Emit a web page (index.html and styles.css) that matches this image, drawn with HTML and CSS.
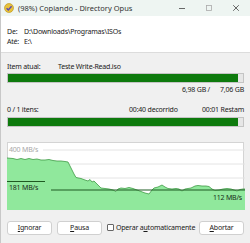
FILE: index.html
```html
<!DOCTYPE html>
<html lang="pt">
<head>
    <meta charset="UTF-8">
    <title>(98%) Copiando - Directory Opus</title>
    <link rel="stylesheet" href="styles.css">
</head>
<body>
    <div class="window">
        <div class="titlebar">
            <svg class="app-icon" width="10" height="10" viewBox="0 0 10 10">
                <circle cx="5" cy="5" r="4.5" fill="#e8c23a" stroke="#b8901a" stroke-width="0.6"/>
                <path d="M2.6 5.2 L4.3 7 L7.6 3.2" fill="none" stroke="#5a4ab0" stroke-width="1.4"/>
            </svg>
            <span class="title">(98%) Copiando - Directory Opus</span>
            <div class="controls">
                <svg width="8" height="8" viewBox="0 0 8 8"><path d="M1 4.5 H7" stroke="#444" stroke-width="0.8"/></svg>
                <svg width="8" height="8" viewBox="0 0 8 8"><rect x="1.5" y="1.5" width="5" height="5" fill="none" stroke="#aaa" stroke-width="0.8"/></svg>
                <svg width="8" height="8" viewBox="0 0 8 8"><path d="M1.2 1.2 L6.8 6.8 M6.8 1.2 L1.2 6.8" stroke="#444" stroke-width="0.8"/></svg>
            </div>
        </div>

        <div class="paths">
            <div class="path-row"><span class="path-label">De:</span><span>D:\Downloads\Programas\ISOs</span></div>
            <div class="path-row"><span class="path-label">Até:</span><span>E:\</span></div>
        </div>

        <div class="content">
            <div class="info-row"><span class="item-label">Item atual:</span><span>Teste Write-Read.iso</span></div>
            <div class="bar"><div class="fill" style="width: 98%"></div></div>
            <div class="sizes"><span class="done">6,98 GB /</span><span class="total">7,06 GB</span></div>

            <div class="info-row count-row">
                <span class="count">0 / 1 itens:</span>
                <span class="elapsed">00:40 decorrido</span>
                <span class="remain">00:01 Restam</span>
            </div>
            <div class="bar"><div class="fill" style="width: 98%"></div></div>

            <div class="graph">
                <svg width="238" height="68" viewBox="6 142 238 68">
                    <line x1="42" y1="150" x2="244" y2="150" class="grid"/>
                    <line x1="6" y1="164" x2="244" y2="164" class="grid"/>
                    <line x1="6" y1="178" x2="244" y2="178" class="grid"/>
                    <polygon class="area" points="6,210 6,158 12,158.5 16,159.5 20,158.5 24,159.5 28,158.5 32,159.5 36,159 40,160 44,160 48,159.5 52,160.5 56,161 60,161 64,161.5 67,162 70,168 73,174 75,177.5 80,178.5 84,180 87,181 89,179.5 91,182 93,181 96,184 98,186 100,188 104,188.5 108,189 112,190 115,191.5 117,189 120,188 124,188.5 128,187.5 132,188.5 136,190 140,191.5 144,193 148,194 151,190 153,188 157,187 161,185 164,187 167,188.5 171,189 175,188.5 178,189 181,191 184,189 187,188.5 190,188 194,186 197,185.5 201,186 205,186 208,186.5 211,189 214,190.5 218,190 222,189 226,188.5 230,189 233,190 236,191 239,189.5 242,189 244,189 244,210"/>
                    <polyline class="edge" points="6,158 12,158.5 16,159.5 20,158.5 24,159.5 28,158.5 32,159.5 36,159 40,160 44,160 48,159.5 52,160.5 56,161 60,161 64,161.5 67,162 70,168 73,174 75,177.5 80,178.5 84,180 87,181 89,179.5 91,182 93,181 96,184 98,186 100,188 104,188.5 108,189 112,190 115,191.5 117,189 120,188 124,188.5 128,187.5 132,188.5 136,190 140,191.5 144,193 148,194 151,190 153,188 157,187 161,185 164,187 167,188.5 171,189 175,188.5 178,189 181,191 184,189 187,188.5 190,188 194,186 197,185.5 201,186 205,186 208,186.5 211,189 214,190.5 218,190 222,189 226,188.5 230,189 233,190 236,191 239,189.5 242,189 244,189"/>
                    <line x1="6" y1="181.5" x2="44" y2="181.5" class="avg"/>
                    <line x1="50" y1="190" x2="244" y2="190" class="avg"/>
                    <text x="8" y="152" class="max-label">400 MB/s</text>
                    <text x="8" y="190" class="speed-label">181 MB/s</text>
                    <text x="241" y="200" class="speed-label" text-anchor="end">112 MB/s</text>
                </svg>
            </div>
        </div>

        <div class="buttons">
            <button class="btn"><u>I</u>gnorar</button>
            <button class="btn"><u>P</u>ausa</button>
            <label class="auto"><span class="check"></span>Operar a<u>u</u>tomaticamente</label>
            <button class="btn last"><u>A</u>bortar</button>
        </div>
    </div>
</body>
</html>
```

FILE: styles.css
```css
* { margin: 0; padding: 0; box-sizing: border-box; }
body { font-family: 'Noto Sans', 'Open Sans', sans-serif; font-size: 7px; letter-spacing: -0.2px; color: #1a1a1a; background: #f0f0f0; }
.window { width: 250px; height: 243px; display: flex; flex-direction: column; background: #f0f0f0; border-left: 1px solid #c8c8c8; }
.titlebar { height: 16px; background: #eef5f2; display: flex; align-items: center; padding-left: 3px; }
.app-icon { margin-right: 4px; }
.title { color: #333; font-size: 7.5px; letter-spacing: 0; }
.controls { margin-left: auto; display: flex; gap: 19px; padding-right: 10px; }
.paths { height: 37px; background: white; border-bottom: 1px solid #dcdcdc; padding: 11px 0 0 6px; }
.path-row { display: flex; line-height: 9.5px; }
.path-label { width: 17px; }
.content { padding: 8.5px 6px 0 6px; }
.info-row { display: flex; line-height: 10px; white-space: nowrap; }
.item-label { width: 51px; }
.bar { height: 10px; margin-top: 1.5px; border: 1px solid #c4c4c4; background: #e6e6e6; }
.fill { height: 100%; background: #0e7a0d; }
.sizes { display: flex; justify-content: flex-end; line-height: 10px; margin-top: 2px; }
.done { margin-right: 10px; }
.count-row { margin-top: 10px; }
.count { flex: 1; }
.elapsed { width: 73px; }
.remain { text-align: right; }
.graph { margin-top: 15px; height: 68px; background: white; border: 1px solid #d4d4d4; }
.graph svg { display: block; margin: -1px; }
.grid { stroke: #e4e4e4; stroke-width: 1; }
.area { fill: #90e89c; }
.edge { fill: none; stroke: #3f9a45; stroke-width: 0.8; }
.avg { stroke: #1f5a22; stroke-width: 1; }
.max-label { fill: #a8a8a8; font-size: 7px; font-family: 'Noto Sans', sans-serif; }
.speed-label { fill: #1a2e1a; font-size: 7px; font-family: 'Noto Sans', sans-serif; }
.buttons { display: flex; align-items: center; padding: 0 6px; margin-top: 11px; }
.btn { width: 45px; height: 14px; background: white; border: 1px solid #d0d0d0; border-radius: 3px; font-family: inherit; font-size: 7px; letter-spacing: -0.2px; color: #1a1a1a; margin-right: 5px; }
.btn.last { margin-right: 0; }
.auto { display: flex; align-items: center; flex: 1; white-space: nowrap; }
.check { width: 7px; height: 7px; border: 1px solid #666; border-radius: 1px; background: white; margin-right: 2px; }
```
